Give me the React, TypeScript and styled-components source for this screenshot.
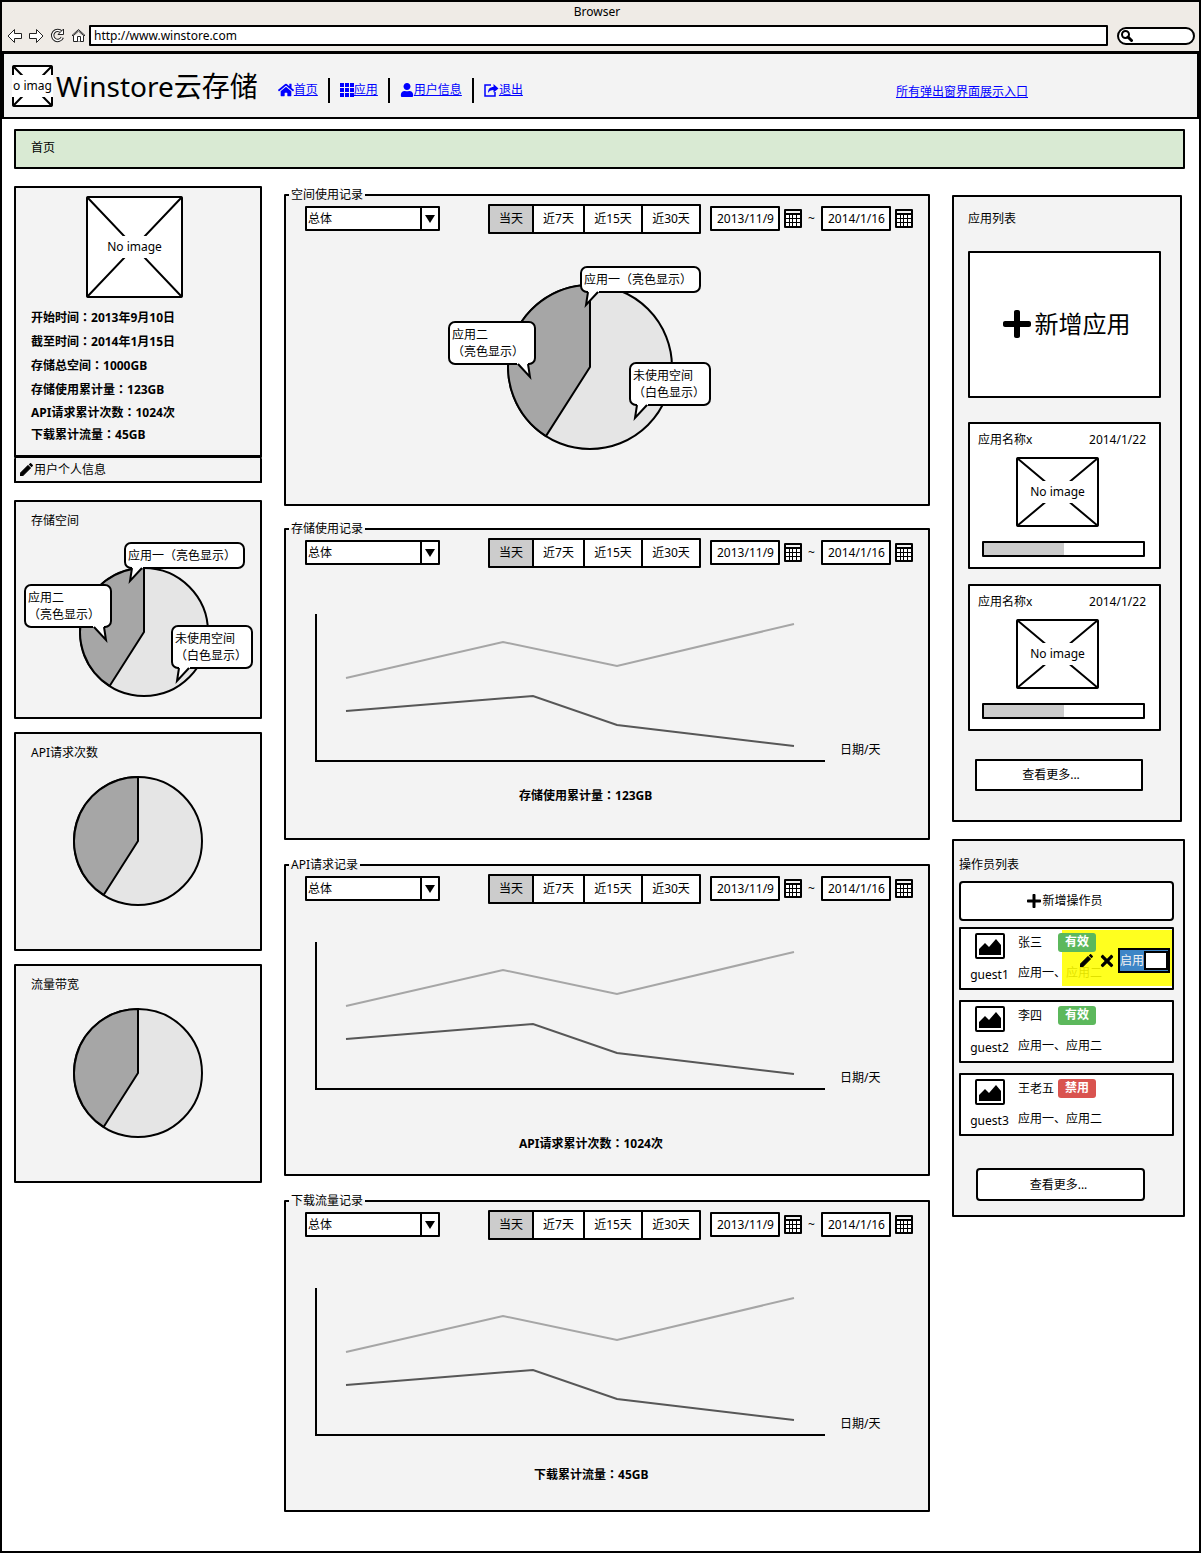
import React from "react";
import styled, { createGlobalStyle } from "styled-components";
import { FaHome, FaUser, FaPlus, FaTimes } from "react-icons/fa";

const GlobalStyle = createGlobalStyle`
  *, *::before, *::after { box-sizing: border-box; }
  body {
    margin: 0;
    background: #fff;
    color: #000;
    font: 12px/18px "Noto Sans", "Noto Sans CJK SC", sans-serif;
  }
  button, input, select { font: inherit; color: inherit; margin: 0; }
  button { cursor: pointer; }
  svg { display: block; flex: none; }
  h1, h2, p, ul { margin: 0; padding: 0; font-size: inherit; font-weight: inherit; }
  ul { list-style: none; }
`;

const LINE = "2px solid #000";
const PANEL = "#f3f3f3";

const Page = styled.div`
  min-height: 100vh;
  border: ${LINE};
  padding-bottom: 39px;
`;

/* Browser frame */

const Chrome = styled.div`
  background: #efebe6;
  padding: 1px 4px 5px 3px;
`;

const ChromeTitle = styled.p`
  text-align: center;
  padding-right: 6px;
  margin-bottom: 4px;
`;

const ChromeRow = styled.div`
  display: flex;
  align-items: center;
`;

const ChromeButton = styled.button`
  display: grid;
  place-items: center;
  width: 20px;
  height: 20px;
  padding: 0;
  border: 0;
  background: none;
  & + & { margin-left: 1px; }
`;

const AddressInput = styled.input`
  flex: 1;
  min-width: 0;
  height: 21px;
  margin: 0 9px 0 1px;
  padding: 0 3px;
  border: ${LINE};
  border-radius: 1px;
  background: #fff;
`;

const SearchBox = styled.label`
  display: flex;
  align-items: center;
  width: 78px;
  height: 18px;
  padding-left: 2px;
  border: ${LINE};
  border-radius: 9px;
  background: #fff;
`;

const SearchInput = styled.input`
  width: 56px;
  height: 14px;
  padding: 0;
  border: 0;
  background: none;
`;

/* Site header */

const Header = styled.header`
  display: flex;
  align-items: center;
  height: 68px;
  padding-left: 8px;
  border: ${LINE};
  border-top-width: 3px;
  background: ${PANEL};
`;

const Brand = styled.h1`
  margin-left: 3px;
  font-size: 28px;
  line-height: 40px;
  white-space: nowrap;
`;

const Nav = styled.nav`
  display: flex;
  align-items: center;
  margin: 9px 0 0 20px;
`;

const NavLink = styled.a`
  display: flex;
  align-items: center;
  color: #00f;
  white-space: nowrap;
`;

const NavDivider = styled.span`
  width: 2px;
  height: 25px;
  margin: 0 10px;
  background: #000;
`;

const PopupLink = styled.a`
  margin: 12px 169px 0 auto;
  color: #00f;
`;

/* Page body */

const Body = styled.main`
  padding: 10px 14px 0 12px;
`;

const Crumb = styled.div`
  height: 40px;
  margin-bottom: 17px;
  padding-left: 15px;
  border: ${LINE};
  border-radius: 1px;
  background: #d9ead3;
  line-height: 34px;
`;

const Columns = styled.div`
  display: grid;
  grid-template-columns: 248px minmax(0, 1fr) 233px;
  column-gap: 22px;
  align-items: start;
`;

const Stack = styled.div<{ $gap: number; $top?: number }>`
  display: flex;
  flex-direction: column;
  gap: ${(p) => p.$gap}px;
  padding-top: ${(p) => p.$top ?? 0}px;
  min-width: 0;
`;

const ImageBox = styled.div<{ $w: number; $h: number }>`
  display: grid;
  grid-template: 100% / 100%;
  place-items: center;
  flex: none;
  width: ${(p) => p.$w}px;
  height: ${(p) => p.$h}px;
  overflow: hidden;
  > * { grid-area: 1 / 1; }
`;

const ImageText = styled.span`
  z-index: 1;
  padding: 2px;
  background: #fff;
  white-space: nowrap;
`;

const ProfileCard = styled.section`
  padding: 8px 0 9px 15px;
  border: ${LINE};
  border-bottom-width: 3px;
  border-radius: 1px;
  background: ${PANEL};
`;

const ProfileImage = styled.div`
  margin: 0 0 8px 55px;
`;

const Fact = styled.p<{ $tight?: boolean }>`
  font-weight: 700;
  line-height: ${(p) => (p.$tight ? 22 : 24)}px;
`;

const Colon = styled.span`
  font-family: "Noto Sans CJK TC", sans-serif;
  line-height: 1;
`;

const ProfileLink = styled.a`
  display: flex;
  align-items: center;
  gap: 1px;
  height: 25px;
  padding-left: 4px;
  border: ${LINE};
  border-top: 0;
  border-radius: 1px;
  background: ${PANEL};
  color: #000;
  text-decoration: none;
`;

const StatCard = styled.section`
  min-height: 219px;
  padding: 10px 0 0 15px;
  border: ${LINE};
  border-radius: 1px;
  background: ${PANEL};
`;

const PieStage = styled.div<{ $left: number; $top: number; $size: number }>`
  position: relative;
  width: ${(p) => p.$size}px;
  height: ${(p) => p.$size}px;
  margin: ${(p) => p.$top}px 0 0 ${(p) => p.$left}px;
`;

const Bubble = styled.div<{ $x: number; $y: number; $w: number }>`
  position: absolute;
  left: calc(50% + ${(p) => p.$x}px);
  top: calc(50% + ${(p) => p.$y}px);
  width: ${(p) => p.$w}px;
  padding: 3px 0 3px 2px;
  border: ${LINE};
  border-radius: 7px;
  background: #fff;
  line-height: 17px;
  white-space: nowrap;
`;

const BubbleTail = styled.svg<{ $right?: boolean }>`
  position: absolute;
  top: calc(100% - 1px);
  ${(p) => (p.$right ? "right: 0; transform: scaleX(-1);" : "left: 0;")}
`;

/* Record panels */

const Panel = styled.fieldset`
  min-width: 0;
  height: 320px;
  margin: 0;
  padding: 0;
  border: ${LINE};
  border-radius: 1px;
  background: ${PANEL};
`;

const Legend = styled.legend`
  margin-left: 3px;
  padding: 0 2px;
`;

const Toolbar = styled.div`
  display: flex;
  align-items: center;
  height: 30px;
  padding: 0 15px 0 19px;
`;

const SelectWrap = styled.div`
  position: relative;
  width: 135px;
  margin: 0 auto 1px 0;
`;

const Select = styled.select`
  display: block;
  width: 100%;
  height: 25px;
  padding: 0 20px 0 1px;
  border: ${LINE};
  border-radius: 1px;
  background: #fff;
  appearance: none;
`;

const SelectArrow = styled.span`
  position: absolute;
  inset: 2px 2px 2px auto;
  display: grid;
  place-items: center;
  width: 18px;
  border-left: ${LINE};
  pointer-events: none;
`;

const RangeGroup = styled.div`
  display: flex;
  height: 30px;
  margin-right: 9px;
  border: ${LINE};
  border-radius: 1px;
`;

const RangeButton = styled.button<{ $active?: boolean; $w: number }>`
  width: ${(p) => p.$w}px;
  padding: 0;
  border: 0;
  background: ${(p) => (p.$active ? "#ccc" : "#fff")};
  white-space: nowrap;
  & + & { border-left: ${LINE}; }
`;

const DateInput = styled.input`
  width: 70px;
  height: 25px;
  margin-bottom: 1px;
  padding: 0 0 0 5px;
  border: ${LINE};
  border-radius: 1px;
  background: #fff;
`;

const CalendarButton = styled.button`
  padding: 0;
  margin: 0 0 1px 4px;
  border: 0;
  background: none;
`;

const Tilde = styled.span`
  width: 19px;
  text-align: center;
`;

const ChartRow = styled.div<{ $top: number }>`
  display: flex;
  align-items: flex-end;
  margin: ${(p) => p.$top}px 0 0 29px;
`;

const AxisLabel = styled.span`
  margin: 0 0 3px 15px;
`;

const Caption = styled.p<{ $top: number; $left: number }>`
  margin-top: ${(p) => p.$top}px;
  padding-left: ${(p) => p.$left}px;
  font-weight: 700;
`;

/* Application list */

const AppsPanel = styled.section`
  margin-right: 3px;
  padding: 13px 19px 29px 14px;
  border: ${LINE};
  border-radius: 1px;
  background: ${PANEL};
`;

const AddAppButton = styled.button`
  display: flex;
  align-items: center;
  justify-content: center;
  gap: 2px;
  width: 100%;
  height: 147px;
  margin: 23px 0 24px;
  padding: 0 0 2px 2px;
  border: ${LINE};
  border-radius: 1px;
  background: #fff;
  font-size: 24px;
  line-height: 36px;
`;

const AppCard = styled.article`
  padding: 7px 13px 10px 8px;
  border: ${LINE};
  border-radius: 1px;
  background: #fff;
`;

const AppHead = styled.div`
  display: flex;
  justify-content: space-between;
`;

const AppImage = styled.div`
  margin: 8px 0 14px 38px;
`;

const Meter = styled.div`
  height: 16px;
  margin: 0 1px 0 4px;
  border: ${LINE};
  border-radius: 1px;
`;

const MeterFill = styled.div`
  height: 100%;
  background: #ccc;
`;

const MoreButton = styled.button<{ $operators?: boolean }>`
  display: block;
  width: ${(p) => (p.$operators ? 169 : 168)}px;
  height: ${(p) => (p.$operators ? 33 : 32)}px;
  margin: ${(p) => (p.$operators ? "32px 0 0 17px" : "28px 0 0 7px")};
  padding: ${(p) => (p.$operators ? "0 4px 0 0" : "0 16px 0 0")};
  border: ${LINE};
  border-radius: ${(p) => (p.$operators ? 4 : 1)}px;
  background: #fff;
`;

/* Operator list */

const OperatorsPanel = styled.section`
  padding: 15px 9px 14px 5px;
  border: ${LINE};
  border-radius: 1px;
  background: ${PANEL};
`;

const AddOperatorButton = styled.button`
  display: flex;
  align-items: center;
  justify-content: center;
  width: 100%;
  height: 40px;
  margin: 7px 0 6px;
  padding: 0 4px 0 0;
  border: ${LINE};
  border-radius: 4px;
  background: #fff;
`;

const OperatorList = styled.ul`
  display: grid;
  gap: 10px;
`;

const OperatorItem = styled.li`
  position: relative;
  display: flex;
  height: 63px;
  padding: 4px 0 0 9px;
  border: ${LINE};
  border-radius: 1px;
  background: #fff;
`;

const Avatar = styled.div`
  display: flex;
  flex-direction: column;
  align-items: center;
  gap: 7px;
  width: 39px;
  margin-right: 9px;
`;

const NameRow = styled.div`
  display: flex;
  align-items: center;
  height: 19px;
  margin-bottom: 12px;
`;

const Name = styled.span`
  min-width: 40px;
`;

const Badge = styled.span<{ $off?: boolean }>`
  z-index: 2;
  width: 38px;
  height: 19px;
  border-radius: 3px;
  background: ${(p) => (p.$off ? "#d9534f" : "#5cb85c")};
  color: #fff;
  font-weight: 700;
  line-height: 17px;
  text-align: center;
`;

const HoverActions = styled.div`
  position: absolute;
  inset: 1px 0 2px auto;
  display: flex;
  align-items: center;
  width: 110px;
  padding: 5px 2px 0 17px;
  background: rgba(255, 255, 0, 0.88);
`;

const IconButton = styled.button`
  display: grid;
  place-items: center;
  width: 15px;
  margin-right: 4px;
  padding: 0;
  border: 0;
  background: none;
`;

const Toggle = styled.label`
  display: flex;
  align-items: center;
  width: 52px;
  height: 25px;
  margin-left: auto;
  border: ${LINE};
  background: #3d85c6;
  color: #f3f3f3;
  white-space: nowrap;
`;

const ToggleInput = styled.input`
  flex: none;
  width: 24px;
  height: 19px;
  margin: 0 1px 0 auto;
  border: ${LINE};
  background: #fff;
  appearance: none;
`;

function NoImage({ w, h, label = "No image" }: { w: number; h: number; label?: string }) {
  return (
    <ImageBox $w={w} $h={h}>
      <svg width={w} height={h} viewBox={`0 0 ${w} ${h}`} fill="#fff" stroke="#000" strokeWidth="2">
        <rect x="1" y="1" width={w - 2} height={h - 2} rx="1" />
        <path d={`M1 1L${w - 1} ${h - 1}M${w - 1} 1L1 ${h - 1}`} />
      </svg>
      <ImageText>{label}</ImageText>
    </ImageBox>
  );
}

function PencilIcon() {
  return (
    <svg width="13" height="13" viewBox="3 3 18 18">
      <path d="M3 17.250V21h3.750L17.810 9.940l-3.750-3.750L3 17.250z" stroke="#000" />
      <path d="M20.710 7.040a1 1 0 0 0 0-1.410l-2.340-2.340a1 1 0 0 0-1.410 0l-1.830 1.830 3.750 3.750 1.830-1.830z" />
    </svg>
  );
}

function Tail({ right }: { right?: boolean }) {
  return (
    <BubbleTail $right={right} width="20" height="20" viewBox="0 0 20 20">
      <path d="M6 0V2L3 16L17 2V0Z" fill="#fff" />
      <path d="M6 2L4 15L16 2" fill="none" stroke="#000" strokeWidth="2" />
    </BubbleTail>
  );
}

function Pie({ r }: { r: number }) {
  const c = r + 1;
  const ex = c - r * 0.537;
  const ey = c + r * 0.843;
  return (
    <svg width={c * 2} height={c * 2} viewBox={`0 0 ${c * 2} ${c * 2}`} stroke="#000" strokeWidth="2">
      <circle cx={c} cy={c} r={r} fill="#e5e5e5" />
      <path d={`M${c} ${c}V1A${r} ${r} 0 0 0 ${ex} ${ey}Z`} fill="#a6a6a6" />
    </svg>
  );
}

type Point = [number, number];

function Bubbles({ at }: { at: [Point, Point, Point] }) {
  return (
    <>
      <Bubble $x={at[0][0]} $y={at[0][1]} $w={121}>
        应用一（亮色显示）
        <Tail />
      </Bubble>
      <Bubble $x={at[1][0]} $y={at[1][1]} $w={88}>
        应用二
        <br />
        （亮色显示）
        <Tail right />
      </Bubble>
      <Bubble $x={at[2][0]} $y={at[2][1]} $w={82}>
        未使用空间
        <br />
        （白色显示）
        <Tail />
      </Bubble>
    </>
  );
}

function FactText({ label, value }: { label: string; value: string }) {
  return (
    <>
      {label}
      <Colon>：</Colon>
      {value}
    </>
  );
}

function CalendarIcon() {
  return (
    <svg width="18" height="19" viewBox="0 0 18 19">
      <rect width="18" height="19" rx="1" />
      <rect x="2" y="2" width="14" height="2" fill="#f3f3f3" />
      {[6, 10, 14].map((y) =>
        [2, 6, 9, 13].map((x) => (
          <rect key={`${x}-${y}`} x={x} y={y} width={x === 6 ? 2 : 3} height="3" fill="#fff" />
        )),
      )}
    </svg>
  );
}

const RANGES = [
  { label: "当天", width: 42 },
  { label: "近7天", width: 51 },
  { label: "近15天", width: 58 },
  { label: "近30天", width: 58 },
];

function RecordPanel({ title, children }: { title: string; children: React.ReactNode }) {
  return (
    <Panel>
      <Legend>{title}</Legend>
      <Toolbar>
        <SelectWrap>
          <Select aria-label={title}>
            <option>总体</option>
          </Select>
          <SelectArrow>
            <svg width="10" height="8" viewBox="0 0 10 8">
              <path d="M0 0H10L5 8Z" />
            </svg>
          </SelectArrow>
        </SelectWrap>
        <RangeGroup>
          {RANGES.map((r, i) => (
            <RangeButton key={r.label} type="button" $active={i === 0} $w={r.width}>
              {r.label}
            </RangeButton>
          ))}
        </RangeGroup>
        <DateInput aria-label="开始日期" defaultValue="2013/11/9" />
        <CalendarButton type="button" aria-label="选择开始日期">
          <CalendarIcon />
        </CalendarButton>
        <Tilde>~</Tilde>
        <DateInput aria-label="结束日期" defaultValue="2014/1/16" />
        <CalendarButton type="button" aria-label="选择结束日期">
          <CalendarIcon />
        </CalendarButton>
      </Toolbar>
      {children}
    </Panel>
  );
}

function LineChart({ top }: { top: number }) {
  return (
    <ChartRow $top={top}>
      <svg width="510" height="148" viewBox="0 0 510 148" fill="none" strokeWidth="2">
        <path d="M1 0V147H510" stroke="#000" />
        <path d="M31 64L188 28L302 52L479 10" stroke="#a6a6a6" />
        <path d="M31 97L218 82L302 111L479 132" stroke="#575757" />
      </svg>
      <AxisLabel>日期/天</AxisLabel>
    </ChartRow>
  );
}

const FACTS = [
  { label: "开始时间", value: "2013年9月10日" },
  { label: "截至时间", value: "2014年1月15日" },
  { label: "存储总空间", value: "1000GB" },
  { label: "存储使用累计量", value: "123GB" },
  { label: "API请求累计次数", value: "1024次" },
  { label: "下载累计流量", value: "45GB" },
];

const RECORDS = [
  { title: "存储使用记录", label: "存储使用累计量", value: "123GB", top: 46, gap: 25, left: 233 },
  { title: "API请求记录", label: "API请求累计次数", value: "1024次", top: 38, gap: 45, left: 233 },
  { title: "下载流量记录", label: "下载累计流量", value: "45GB", top: 48, gap: 30, left: 248 },
];

const OPERATORS = [
  { id: "guest1", name: "张三", off: false, hovered: true },
  { id: "guest2", name: "李四", off: false, hovered: false },
  { id: "guest3", name: "王老五", off: true, hovered: false },
];

function BrowserChrome() {
  return (
    <Chrome>
      <ChromeTitle>Browser</ChromeTitle>
      <ChromeRow>
        <ChromeButton type="button" aria-label="后退">
          <svg width="16" height="16" viewBox="0 0 16 16" fill="#fff" stroke="#222">
            <path d="M1 8L7.500 1.500V5.500H14.500V10.500H7.500V14.500Z" />
          </svg>
        </ChromeButton>
        <ChromeButton type="button" aria-label="前进">
          <svg width="16" height="16" viewBox="0 0 16 16" fill="#fff" stroke="#222">
            <path d="M15 8L8.500 1.500V5.500H1.500V10.500H8.500V14.500Z" />
          </svg>
        </ChromeButton>
        <ChromeButton type="button" aria-label="刷新">
          <svg width="15" height="15" viewBox="0 0 15 15" fill="none">
            <path d="M11.500 4.200A5 5 0 1 0 12.300 9.300" stroke="#222" strokeWidth="3.400" />
            <path d="M11.500 4.200A5 5 0 1 0 12.300 9.300" stroke="#fff" strokeWidth="1.400" />
            <path d="M13.500 1V6.500H8Z" fill="#fff" stroke="#222" />
          </svg>
        </ChromeButton>
        <ChromeButton type="button" aria-label="主页">
          <svg width="15" height="15" viewBox="0 0 15 15" fill="#fff" stroke="#222">
            <path d="M2.500 7.500V13.500H12.500V7.500" />
            <path d="M1 7.500L7.500 1.500L14 7.500H12.500L7.500 3L2.500 7.500Z" />
            <path d="M6.500 13.500V8.500H9.500V13.500" />
          </svg>
        </ChromeButton>
        <AddressInput aria-label="地址" defaultValue="http://www.winstore.com" />
        <SearchBox>
          <svg width="12" height="12" viewBox="0 0 12 12" fill="none" stroke="#000">
            <circle cx="4.500" cy="4.500" r="3.500" strokeWidth="2" />
            <path d="M7 7L10.500 10.500" strokeWidth="3" strokeLinecap="round" />
          </svg>
          <SearchInput aria-label="搜索" />
        </SearchBox>
      </ChromeRow>
    </Chrome>
  );
}

function SiteHeader() {
  return (
    <Header>
      <NoImage w={41} h={42} label="o imag" />
      <Brand>Winstore云存储</Brand>
      <Nav>
        <NavLink href="#home">
          <FaHome size={16} />
          首页
        </NavLink>
        <NavDivider />
        <NavLink href="#apps">
          <svg width="14" height="14" viewBox="0 0 14 14" fill="currentColor">
            {[0, 5, 10].map((y) => [0, 5, 10].map((x) => <rect key={`${x}-${y}`} x={x} y={y} width="4" height="4" />))}
          </svg>
          应用
        </NavLink>
        <NavDivider />
        <NavLink href="#user">
          <FaUser size={14} />
          用户信息
        </NavLink>
        <NavDivider />
        <NavLink href="#logout">
          <svg width="15" height="14" viewBox="0 0 15 14">
            <path d="M7 2H1V13H11V9" fill="none" stroke="currentColor" strokeWidth="1.500" />
            <path d="M4 10C4 6 6 4 9.500 4V1L14.500 5.500L9.500 9.500V7C7 7 5 8 4 10Z" fill="currentColor" />
          </svg>
          退出
        </NavLink>
      </Nav>
      <PopupLink href="#popups">所有弹出窗界面展示入口</PopupLink>
    </Header>
  );
}

export default function App() {
  return (
    <>
      <GlobalStyle />
      <Page>
        <BrowserChrome />
        <SiteHeader />
        <Body>
          <Crumb>首页</Crumb>
          <Columns>
            <Stack $gap={17}>
              <div>
                <ProfileCard>
                  <ProfileImage>
                    <NoImage w={97} h={102} />
                  </ProfileImage>
                  {FACTS.map((f, i) => (
                    <Fact key={f.label} $tight={i > 3}>
                      <FactText {...f} />
                    </Fact>
                  ))}
                </ProfileCard>
                <ProfileLink href="#profile">
                  <PencilIcon />
                  用户个人信息
                </ProfileLink>
              </div>
              <Stack $gap={13}>
                <StatCard>
                  <h2>存储空间</h2>
                  <PieStage $left={48} $top={37} $size={130}>
                    <Pie r={64} />
                    <Bubbles at={[[-20, -90], [-120, -48], [27, -7]]} />
                  </PieStage>
                </StatCard>
                <StatCard>
                  <h2>API请求次数</h2>
                  <PieStage $left={42} $top={14} $size={130}>
                    <Pie r={64} />
                  </PieStage>
                </StatCard>
                <StatCard>
                  <h2>流量带宽</h2>
                  <PieStage $left={42} $top={14} $size={130}>
                    <Pie r={64} />
                  </PieStage>
                </StatCard>
              </Stack>
            </Stack>

            <Stack $gap={14}>
              <RecordPanel title="空间使用记录">
                <PieStage $left={221} $top={50} $size={166}>
                  <Pie r={82} />
                  <Bubbles at={[[-10, -101], [-142, -46], [39, -5]]} />
                </PieStage>
              </RecordPanel>
              <Stack $gap={16}>
                {RECORDS.map((r) => (
                  <RecordPanel key={r.title} title={r.title}>
                    <LineChart top={r.top} />
                    <Caption $top={r.gap} $left={r.left}>
                      <FactText label={r.label} value={r.value} />
                    </Caption>
                  </RecordPanel>
                ))}
              </Stack>
            </Stack>

            <Stack $gap={17} $top={9}>
              <AppsPanel>
                <h2>应用列表</h2>
                <AddAppButton type="button">
                  <FaPlus size={32} />
                  新增应用
                </AddAppButton>
                <Stack $gap={15}>
                  {["app-1", "app-2"].map((id) => (
                    <AppCard key={id}>
                      <AppHead>
                        <span>应用名称x</span>
                        <span>2014/1/22</span>
                      </AppHead>
                      <AppImage>
                        <NoImage w={83} h={70} />
                      </AppImage>
                      <Meter>
                        <MeterFill style={{ width: "50%" }} />
                      </Meter>
                    </AppCard>
                  ))}
                </Stack>
                <MoreButton type="button">查看更多...</MoreButton>
              </AppsPanel>

              <OperatorsPanel>
                <h2>操作员列表</h2>
                <AddOperatorButton type="button">
                  <FaPlus size={16} />
                  新增操作员
                </AddOperatorButton>
                <OperatorList>
                  {OPERATORS.map((o) => (
                    <OperatorItem key={o.id}>
                      <Avatar>
                        <svg width="30" height="26" viewBox="0 0 30 26">
                          <rect x="1" y="1" width="28" height="24" rx="1" fill="#fff" stroke="#000" strokeWidth="2" />
                          <path d="M4 22V16L10 10L14 14L21 6L26 12V22Z" />
                        </svg>
                        <span>{o.id}</span>
                      </Avatar>
                      <div>
                        <NameRow>
                          <Name>{o.name}</Name>
                          <Badge $off={o.off}>{o.off ? "禁用" : "有效"}</Badge>
                        </NameRow>
                        <p>应用一、应用二</p>
                      </div>
                      {o.hovered && (
                        <HoverActions>
                          <IconButton type="button" aria-label="编辑">
                            <PencilIcon />
                          </IconButton>
                          <IconButton type="button" aria-label="删除">
                            <FaTimes size={18} />
                          </IconButton>
                          <Toggle>
                            启用
                            <ToggleInput type="checkbox" defaultChecked />
                          </Toggle>
                        </HoverActions>
                      )}
                    </OperatorItem>
                  ))}
                </OperatorList>
                <MoreButton type="button" $operators>
                  查看更多...
                </MoreButton>
              </OperatorsPanel>
            </Stack>
          </Columns>
        </Body>
      </Page>
    </>
  );
}
